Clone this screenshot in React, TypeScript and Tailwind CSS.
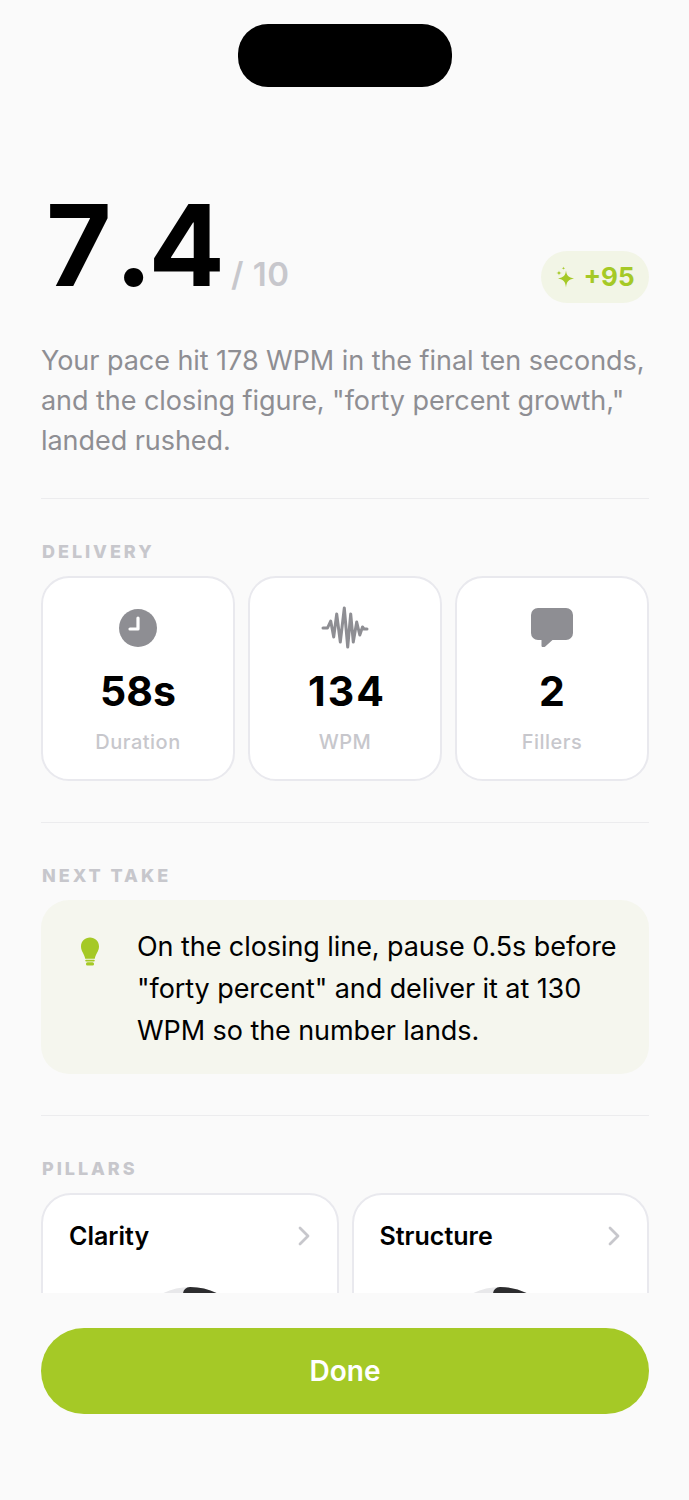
import React from "react";

const font = { fontFamily: "Inter, 'Liberation Sans', sans-serif" };

function Label({ children }: { children: React.ReactNode }) {
  return <div className="pl-[1px] text-[18px] leading-[20px] font-extrabold tracking-[2.95px] text-[#c7c7cc]">{children}</div>;
}

function Stat({ icon, value, label, wide }: { icon: React.ReactNode; value: string; label: string; wide?: boolean }) {
  return (
    <div className="flex h-[205px] flex-col items-center rounded-[28px] border-2 border-[#e9e9ee] bg-white pt-[28px]">
      <div className="flex h-[44px] w-[52px] items-center justify-center">{icon}</div>
      <div className={`mt-[16px] text-[41px] leading-[50px] font-bold text-black ${wide ? "pl-[4px] tracking-[2px]" : ""}`}>{value}</div>
      <div className="mt-[13px] text-[20px] leading-[26px] font-medium tracking-[0.5px] text-[#c7c7cc]">{label}</div>
    </div>
  );
}

function Pillar({ name }: { name: string }) {
  return (
    <div className="h-[320px] rounded-[30px] border-2 border-[#e9e9ee] bg-white px-[26px] pt-[24px]">
      <div className="flex items-center justify-between">
        <span className="text-[25px] leading-[34px] font-semibold text-black">{name}</span>
        <svg width="14" height="20" viewBox="0 0 14 20" fill="none" stroke="#c7c7cc" strokeWidth="2.800" strokeLinecap="round" strokeLinejoin="round">
          <path d="M3 2l8 8-8 8" />
        </svg>
      </div>
      <div className="mt-[34px] flex justify-center">
        <svg width="120" height="120" viewBox="0 0 120 120" fill="none" strokeWidth="14">
          <circle cx="60" cy="60" r="53" stroke="#e8e8ea" />
          <path d="M60 7a53 53 0 0 1 36 14" stroke="#2c2c2e" strokeLinecap="round" />
        </svg>
      </div>
    </div>
  );
}

export default function App() {
  return (
    <div style={font} className="flex h-[1500px] w-[689px] flex-col overflow-hidden bg-[#fafafa]">
      <div className="flex shrink-0 justify-center pt-[24px]">
        <div className="h-[63px] w-[214px] rounded-[30px] bg-black" />
      </div>
      <div className="h-[1206px] shrink-0 overflow-hidden pr-[40px] pl-[41px]">
        <div className="flex h-[222px] items-end justify-between">
          <div className="mb-[-3px] flex items-baseline pl-[5px]">
            <span className="text-[113px] leading-[134px] font-bold tracking-[5px] text-black">
              7<span className="ml-[-2px] tracking-[-4px]">.</span>4
            </span>
            <span className="ml-[1px] text-[33px] leading-[40px] font-semibold tracking-[0.5px] text-[#c7c7cc]">/ 10</span>
          </div>
          <div className="mb-[6px] flex h-[52px] w-[108px] items-center justify-center gap-[8px] rounded-[26px] bg-[#f2f5e6]">
            <svg width="20" height="22" viewBox="0 0 20 22" fill="#a5c926">
              <path d="M11 4.500c.6 5 2.400 7 8 8-5.600 1-7.400 3-8 9-.6-6-2.400-8-8-9 5.600-1 7.400-3 8-8z" />
              <path d="M4 4.500c.2 1.500.8 2.200 2.800 2.500-2 .3-2.600 1-2.800 2.500-.2-1.500-.8-2.200-2.800-2.500 2-.3 2.600-1 2.800-2.500z" />
              <path d="M8.500 .5c.1 1.100.5 1.600 1.800 1.800-1.300.2-1.700.7-1.800 1.800-.1-1.100-.5-1.600-1.800-1.800 1.300-.2 1.700-.7 1.800-1.800z" />
            </svg>
            <span className="text-[26px] leading-[30px] font-bold text-[#a5c926]">+95</span>
          </div>
        </div>
        <p className="mt-[32px] text-[27px] leading-[40px] tracking-[-0.05px] text-[#8e8e93]">
          Your pace hit 178 WPM in the final ten seconds, and the closing figure, "forty percent growth," landed rushed.
        </p>
        <div className="mt-[37px] h-px bg-[#ececee]" />
        <div className="mt-[43px]"><Label>DELIVERY</Label></div>
        <div className="mt-[14px] grid grid-cols-3 gap-[13px]">
          <Stat
            value="58s"
            label="Duration"
            icon={
              <svg width="40" height="40" viewBox="0 0 40 40">
                <circle cx="20" cy="20" r="19" fill="#8e8e93" />
                <path d="M20 10v11h-8" fill="none" stroke="#fff" strokeWidth="3.200" strokeLinecap="round" strokeLinejoin="round" />
              </svg>
            }
          />
          <Stat
            value="134"
            label="WPM"
            wide
            icon={
              <svg width="48" height="44" viewBox="0 0 48 44" fill="none" stroke="#8e8e93" strokeWidth="3" strokeLinecap="round" strokeLinejoin="round">
                <path d="M2 22H6.500L9.700 15L12.700 31L15.700 8L19.300 36L23.300 2L26.700 41L29.700 8L32.300 36L35.700 16L38.800 29L41.500 21L43 23H46" />
              </svg>
            }
          />
          <Stat
            value="2"
            label="Fillers"
            icon={
              <svg width="42" height="40" viewBox="0 0 42 40" fill="#8e8e93">
                <path d="M7 0h28a7 7 0 0 1 7 7v18a7 7 0 0 1-7 7H21.500l-7.500 6.800c-.8.700-3.500.2-3.500-.9V32H7a7 7 0 0 1-7-7V7a7 7 0 0 1 7-7z" />
              </svg>
            }
          />
        </div>
        <div className="mt-[41px] h-px bg-[#ececee]" />
        <div className="mt-[43px]"><Label>NEXT TAKE</Label></div>
        <div className="mt-[14px] flex h-[174px] items-start rounded-[28px] bg-[#f5f6ee] pt-[26px] pl-[40px]">
          <svg width="18" height="30" viewBox="0 0 20 32" fill="#a5c926" className="mt-[11px] shrink-0">
            <path d="M10 0c5.500 0 10 4.200 10 9.800 0 5.500-3.800 8-4.700 13.700H4.700C3.800 17.800 0 15.300 0 9.800 0 4.200 4.500 0 10 0z" />
            <rect x="4.700" y="24.500" width="10.600" height="2" rx="1" />
            <rect x="5.500" y="27.500" width="9" height="3.500" rx="1.750" />
          </svg>
          <p className="ml-[38px] w-[490px] text-[27px] leading-[42px] tracking-[-0.07px] text-black">
            On the closing line, pause 0.5s before "forty percent" and deliver it at 130 WPM so the number lands.
          </p>
        </div>
        <div className="mt-[41px] h-px bg-[#ececee]" />
        <div className="mt-[43px]"><Label>PILLARS</Label></div>
        <div className="mt-[14px] grid grid-cols-2 gap-[13px]">
          <Pillar name="Clarity" />
          <Pillar name="Structure" />
        </div>
      </div>
      <div className="pt-[35px] pr-[40px] pl-[41px]">
        <div className="flex h-[86px] items-center justify-center rounded-[43px] bg-[#a5c926] text-[28px] font-semibold text-white">Done</div>
      </div>
    </div>
  );
}
